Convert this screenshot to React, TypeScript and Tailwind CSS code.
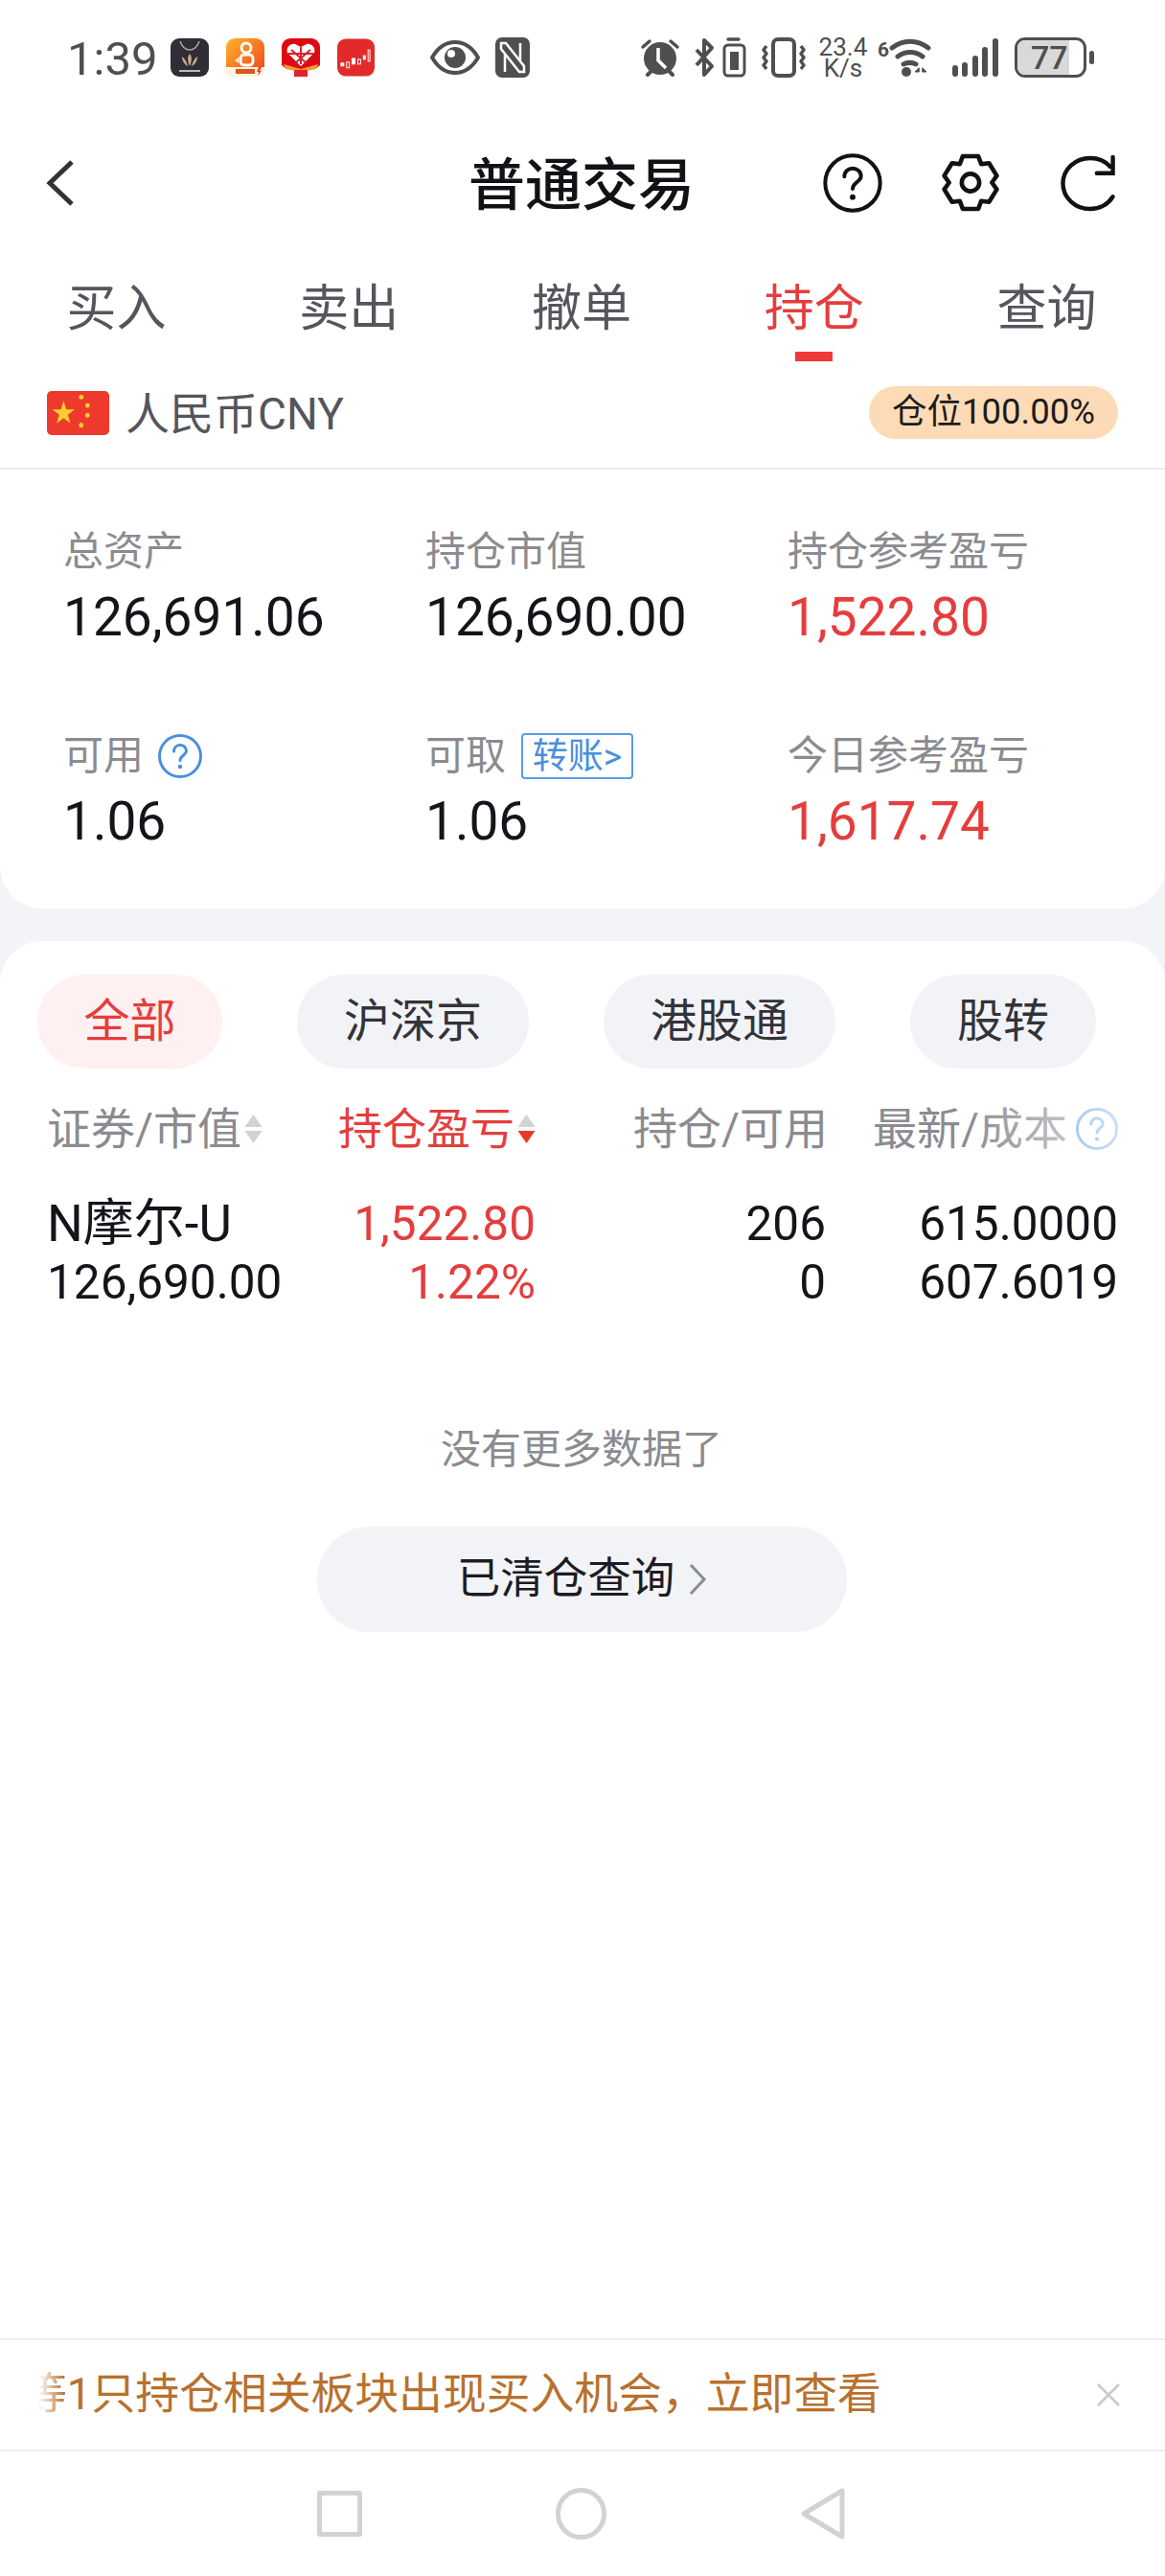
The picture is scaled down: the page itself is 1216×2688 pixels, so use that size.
function HelpIcon({ className, color }: { className: string; color: string }) {
  return (
    <svg viewBox="0 0 48 48" className={className} fill="none" stroke={color} strokeLinecap="round">
      <circle cx="24" cy="24" r="21.5" strokeWidth="3" />
      <path d="M17.5 19c0-4 3-6.500 6.500-6.500s6.500 2.500 6.500 6c0 4.500-6.500 5-6.500 10" strokeWidth="3" />
      <circle cx="24" cy="35" r="1.200" strokeWidth="2" fill={color} />
    </svg>
  );
}

function AppIcons() {
  return (
    <div className="flex ml-[13px] gap-[18px]">
      <svg viewBox="0 0 40 40" className="w-[40px] h-[40px]">
        <rect width="40" height="40" rx="9" fill="#2f2d36" />
        <path d="M10 3c2 6 6 9 10 9s8-3 10-9" stroke="#b8a48c" strokeWidth="1.500" fill="none" />
        <path d="M20 29c-2-5-3-9 0-13c3 4 2 8 0 13zM18 29c-4-2-6-6-6-10c3 2 5 6 6 10zM22 29c4-2 6-6 6-10c-3 2-5 6-6 10z" fill="#c9a98a" />
        <rect x="9" y="33" width="22" height="2" fill="#bbb" />
      </svg>
      <svg viewBox="0 0 40 40" className="w-[40px] h-[40px]">
        <defs>
          <linearGradient id="ks" x1="0" y1="0" x2="1" y2="1">
            <stop offset="0" stopColor="#ffb52a" />
            <stop offset="1" stopColor="#f33c1c" />
          </linearGradient>
        </defs>
        <rect width="40" height="40" rx="9" fill="url(#ks)" />
        <circle cx="21" cy="10" r="5" fill="none" stroke="#fff" strokeWidth="3" />
        <rect x="15" y="17" width="13" height="11" rx="4" fill="none" stroke="#fff" strokeWidth="3" />
        <path d="M13 20l-4 3l4 3z" fill="#fff" />
        <path d="M0 30h40v3a7 7 0 0 1-7 7H7a7 7 0 0 1-7-7z" fill="#fff3df" />
        <rect x="10" y="32" width="20" height="5" fill="#d9541e" />
        <path d="M34 30l3 0-2 4h2l-4 5 1-4h-2z" fill="#f33c1c" />
      </svg>
      <svg viewBox="0 0 40 40" className="w-[40px] h-[40px]">
        <path d="M9 0h22a9 9 0 0 1 9 9v19l-5 4H5l-5-4V9a9 9 0 0 1 9-9z" fill="#dd0a12" />
        <path d="M20 29L6 15c-2-6 4-10 8-9l6 3l6-3c4-1 10 3 8 9z" fill="#fff" />
        <path d="M20 9v18M10 12l16 14M30 12L14 26M7 16h26" stroke="#d5232c" strokeWidth="2" />
        <path d="M2 27l18 5l18-5l-2 5l-16 3l-16-3z" fill="#f39b30" />
        <rect x="13" y="33" width="14" height="7" fill="#e4212a" />
      </svg>
      <svg viewBox="0 0 40 40" className="w-[39px] h-[40px]">
        <rect width="40" height="40" rx="9" fill="#e32a2a" />
        <g fill="#fff" stroke="#fff" strokeWidth="1">
          <rect x="4" y="26" width="3" height="3" />
          <rect x="10" y="25" width="3" height="6" fill="none" />
          <rect x="16" y="21" width="3" height="6" />
          <rect x="22" y="22" width="3" height="5" fill="none" />
          <rect x="28" y="18" width="2" height="4" />
          <rect x="33" y="12" width="2" height="12" fill="none" />
        </g>
      </svg>
    </div>
  );
}

function StatusIconsRight() {
  return (
    <div className="flex items-center ml-auto text-[#4f4f4f]">
      <svg viewBox="0 0 42 40" className="w-[42px] h-[40px]" fill="#4f4f4f">
        <circle cx="21" cy="21" r="17" />
        <path d="M3 9l7-6M39 9l-7-6" stroke="#4f4f4f" strokeWidth="3.500" strokeLinecap="round" />
        <path d="M8 38l4-4M34 38l-4-4" stroke="#4f4f4f" strokeWidth="4" strokeLinecap="round" />
        <path d="M19 10v13l8 8" stroke="#fff" strokeWidth="3.500" fill="none" />
      </svg>
      <svg viewBox="0 0 54 42" className="w-[54px] h-[42px] ml-[15px]" fill="none" stroke="#4f4f4f">
        <path d="M2 13l16 17l-8 9V3l8 8l-16 18" strokeWidth="4" strokeLinejoin="round" />
        <path d="M35 2h11" strokeWidth="3.500" strokeLinecap="round" />
        <rect x="31" y="8" width="21" height="32" rx="4" strokeWidth="3" />
        <rect x="37" y="15" width="9" height="19" fill="#4f4f4f" stroke="none" />
      </svg>
      <svg viewBox="0 0 46 42" className="w-[46px] h-[42px] ml-[16px]" fill="none" stroke="#4f4f4f" strokeWidth="3.500">
        <rect x="12" y="2" width="22" height="38" rx="5" strokeWidth="4" />
        <path d="M5 9l-3 4l3 4l-3 4l3 4l-3 4l3 4M41 9l3 4l-3 4l3 4l-3 4l3 4l-3 4" strokeLinejoin="round" />
      </svg>
      <div className="w-[52px] ml-[13px] flex flex-col items-center text-[#4f4f4f] font-[Roboto,sans-serif]">
        <span className="text-[26px] leading-[22px] h-[22px]">23.4</span>
        <span className="text-[26px] leading-[22px] h-[22px]">K/s</span>
      </div>
      <span className="ml-[10px] mb-[16px] text-[21px] leading-[20px] font-bold font-[Roboto,sans-serif]">6</span>
      <svg viewBox="0 0 44 40" className="w-[44px] h-[40px]" fill="none" stroke="#4f4f4f" strokeWidth="5" strokeLinecap="round">
        <path d="M3 10c12-9 26-9 38 0" />
        <path d="M9 19c8-6 18-6 26 0" />
        <path d="M15 27c4-2 9-2 13 0" />
        <circle cx="18" cy="35" r="5" fill="#4f4f4f" stroke="none" />
        <path d="M31 31l-4 4h4zM35 31l4 4h-4z" fill="#4f4f4f" strokeWidth="1" />
      </svg>
      <svg viewBox="0 0 48 40" className="w-[48px] h-[40px] ml-[22px]" fill="none" stroke="#4f4f4f" strokeWidth="6" strokeLinecap="round">
        <path d="M3 31v6M13 28v9M24 21v16M34 12v25M45 3v34" />
      </svg>
      <div className="relative w-[75px] h-[42px] ml-[17px] rounded-[11px] border-[3px] border-[#4f4f4f] overflow-hidden flex items-center">
        <div className="w-[54px] h-full bg-[#d9d9d9]" />
        <span className="absolute left-[14px] text-[34px] leading-none text-[#4f4f4f] font-[Roboto,sans-serif] font-medium">77</span>
      </div>
      <div className="w-[5px] h-[14px] ml-[3px] rounded-full bg-[#4f4f4f]" />
    </div>
  );
}

function Stat({ label, value, red, extra }: { label: string; value: string; red?: boolean; extra?: React.ReactNode }) {
  return (
    <div className="flex flex-col">
      <div className="flex items-center h-[48px] text-[42px] leading-none text-[#8b8b90]">
        {label}
        {extra}
      </div>
      <div className={`mt-[20px] h-[48px] flex items-center text-[55px] leading-none ${red ? "text-[#e53d3d]" : "text-[#14141a]"}`}>{value}</div>
    </div>
  );
}

function Sort({ active }: { active?: boolean }) {
  return (
    <svg viewBox="0 0 20 34" className="w-[21px] h-[34px] ml-[2px]">
      <path d="M10 2l9 13H1z" fill="#d2d2d2" />
      <path d="M10 32L1 19h18z" fill={active ? "#e8392f" : "#d2d2d2"} />
    </svg>
  );
}

export default function App() {
  const tabs = ["买入", "卖出", "撤单", "持仓", "查询"];
  const pills = [
    { text: "沪深京", w: "w-[242px]" },
    { text: "港股通", w: "w-[242px]" },
    { text: "股转", w: "w-[194px]" },
  ];

  return (
    <div className="w-[1216px] h-[2688px] bg-white flex flex-col overflow-hidden font-[Roboto,'Noto_Sans_CJK_SC',sans-serif]">
      {/* status bar */}
      <div className="h-[120px] flex items-center pl-[70px] pr-[74px] shrink-0">
        <span className="w-[95px] mt-[2px] text-[49px] leading-none text-[#4f4f4f]">1:39</span>
        <AppIcons />
        <svg viewBox="0 0 52 36" className="w-[52px] h-[36px] ml-[58px]">
          <path d="M2 18C9 6 17 2 26 2s17 4 24 16C43 30 35 34 26 34S9 30 2 18z" fill="none" stroke="#4f4f4f" strokeWidth="4" strokeLinejoin="round" />
          <circle cx="26" cy="18" r="11" fill="#4f4f4f" />
          <circle cx="22" cy="14" r="4" fill="#fff" />
        </svg>
        <svg viewBox="0 0 36 42" className="w-[36px] h-[42px] ml-[16px]">
          <rect width="36" height="42" rx="7" fill="#4f4f4f" />
          <path d="M6 6h5l19 24v6h-5L6 12zM10 18v18M26 6v18" fill="none" stroke="#fff" strokeWidth="2.500" />
        </svg>
        <StatusIconsRight />
      </div>

      {/* header */}
      <div className="relative h-[70px] mt-[38px] flex items-center justify-center shrink-0">
        <svg viewBox="0 0 30 48" className="absolute left-[48px] top-[9px] w-[30px] h-[48px]" fill="none" stroke="#333" strokeWidth="5">
          <path d="M27 2L4 24l23 22" />
        </svg>
        <span className="mr-[2px] text-[59px] leading-none text-[#111116] font-medium">普通交易</span>
        <HelpIcon className="absolute left-[858px] top-[1px] w-[64px] h-[64px]" color="#111116" />
        <svg viewBox="0 0 60 64" className="absolute left-[982px] top-0 w-[62px] h-[65px]" fill="none" stroke="#111116" strokeWidth="4.500" strokeLinejoin="round">
          <path d="M22 5h16l3 8 8-1 8 13-5 7 5 7-8 13-8-1-3 8H22l-3-8-8 1-8-13 5-7-5-7 8-13 8 1z" />
          <circle cx="30" cy="32" r="9" />
        </svg>
        <svg viewBox="0 0 60 60" className="absolute left-[1106px] top-[4px] w-[60px] h-[59px]" fill="none" stroke="#111116" strokeWidth="4.500" strokeLinecap="round">
          <path d="M53 12C47 5 39 3 32 3C16 3 3 15 3 30s13 27 29 27c10 0 19-5 24-13" />
          <path d="M56 2v17H39" />
        </svg>
      </div>

      {/* tabs */}
      <div className="mt-[65px] pr-[2px] flex shrink-0">
        {tabs.map((t) => (
          <div key={t} className="flex-1 flex flex-col items-center">
            <span className={`h-[60px] flex items-center text-[52px] leading-none ${t === "持仓" ? "text-[#e53d3d]" : "text-[#55555d]"}`}>{t}</span>
            <div className={`mt-[14px] w-[39px] h-[10px] ${t === "持仓" ? "bg-[#ee3a3a]" : "bg-transparent"}`} />
          </div>
        ))}
      </div>

      {/* currency row */}
      <div className="mt-[26px] h-[55px] flex items-center pl-[49px] pr-[49px] shrink-0">
        <svg viewBox="0 0 30 20" preserveAspectRatio="none" className="w-[65px] h-[46px] rounded-[5px]">
          <rect width="30" height="20" fill="#ee3a2c" />
          <path d="M8 4.500l1.300 3.900 4.100 0-3.300 2.400 1.200 3.900-3.300-2.400-3.300 2.400 1.200-3.900-3.300-2.400 4.100 0z" fill="#ffce2e" />
          <g fill="#ffce2e">
            <circle cx="16.500" cy="2.700" r="1.100" />
            <circle cx="19.500" cy="6.500" r="1.100" />
            <circle cx="19.500" cy="11" r="1.100" />
            <circle cx="16.500" cy="15.500" r="1.100" />
          </g>
        </svg>
        <span className="ml-[17px] mt-[2px] text-[46px] leading-none text-[#55555d]">人民币CNY</span>
        <div className="ml-auto w-[260px] h-[55px] rounded-full bg-[#fddbb6] flex items-center justify-center text-[36.500px] leading-none text-[#1c1c1c]">仓位100.00%</div>
      </div>

      <div className="mt-[30px] h-[2px] bg-[#ededf0] shrink-0" />

      {/* body on grey */}
      <div className="flex-1 bg-[#f3f4f8] flex flex-col min-h-0">
        <div className="bg-white rounded-b-[44px] h-[458px] pt-[62px] pl-[66px] grid grid-cols-[378px_378px_1fr] content-start gap-y-[97px] shrink-0">
          <Stat label="总资产" value="126,691.06" />
          <Stat label="持仓市值" value="126,690.00" />
          <Stat label="持仓参考盈亏" value="1,522.80" red />
          <Stat label="可用" value="1.06" extra={<HelpIcon className="ml-[14px] w-[48px] h-[48px]" color="#4a8fe0" />} />
          <Stat
            label="可取"
            value="1.06"
            extra={
              <span className="ml-[16px] w-[117px] h-[48px] rounded-[4px] border-2 border-[#5b9be6] flex items-center justify-center text-[37px] leading-none text-[#4a8fe0]">转账&gt;</span>
            }
          />
          <Stat label="今日参考盈亏" value="1,617.74" red />
        </div>

        <div className="mt-[34px] flex-1 bg-white rounded-t-[44px] flex flex-col min-h-0">
          {/* filter pills */}
          <div className="mt-[35px] pl-[39px] flex gap-[78px] shrink-0">
            <div className="w-[193px] h-[98px] rounded-full bg-[#fff0f1] text-[#e53d3d] text-[48px] leading-none flex items-center justify-center">全部</div>
            {pills.map((p) => (
              <div key={p.text} className={`${p.w} h-[98px] rounded-full bg-[#f2f3f7] text-[#33333a] text-[48px] leading-none flex items-center justify-center`}>{p.text}</div>
            ))}
          </div>

          {/* table head */}
          <div className="relative mt-[35px] h-[56px] flex items-center pl-[49px] text-[46px] leading-none text-[#8b8b90] shrink-0">
            <div className="flex items-center w-[304px] whitespace-nowrap">证券/市值<Sort /></div>
            <div className="flex items-center w-[308px] whitespace-nowrap text-[#e53d3d]">持仓盈亏<Sort active /></div>
            <div className="w-[200px] whitespace-nowrap">持仓/可用</div>
            <div className="ml-[50px] flex items-center whitespace-nowrap">最新/成本<HelpIcon className="ml-[8px] w-[46px] h-[46px]" color="#4a8fe0" /></div>
            <div className="absolute top-0 right-[30px] w-[180px] h-full bg-gradient-to-r from-white/0 to-white/80" />
          </div>

          {/* holding row */}
          <div className="mt-[51px] pl-[49px] pr-[49px] grid grid-cols-[251px_259px_303px_305px] auto-rows-[41px] gap-y-[20px] text-[49.500px] leading-none text-[#14141a] shrink-0">
            <div className="flex items-center whitespace-nowrap text-[53px]">N摩尔-U</div>
            <div className="flex items-center justify-end text-[#e53d3d]">1,522.80</div>
            <div className="flex items-center justify-end">206</div>
            <div className="flex items-center justify-end">615.0000</div>
            <div className="flex items-center">126,690.00</div>
            <div className="flex items-center justify-end text-[#e53d3d]">1.22%</div>
            <div className="flex items-center justify-end">0</div>
            <div className="flex items-center justify-end">607.6019</div>
          </div>

          <div className="mt-[132px] pr-[2px] h-[44px] text-center text-[42px] leading-[44px] text-[#8b8b90] shrink-0">没有更多数据了</div>

          <div className="mt-[58px] ml-[331px] w-[553px] h-[110px] rounded-full bg-[#f2f3f7] flex items-center justify-center text-[45.500px] leading-none text-[#1c1c22] shrink-0">
            已清仓查询
            <svg viewBox="0 0 20 36" className="ml-[14px] w-[20px] h-[36px]" fill="none" stroke="#8b8b90" strokeWidth="3">
              <path d="M3 3l14 15L3 33" />
            </svg>
          </div>

          <div className="flex-1" />

          {/* banner */}
          <div className="h-[118px] border-y-2 border-[#eeeeee] flex items-center shrink-0">
            <div className="relative ml-[40px] w-[1000px] overflow-hidden">
              <div className="-ml-[16px] whitespace-nowrap text-[45.800px] leading-[60px] text-[#b8712d]">等1只持仓相关板块出现买入机会，立即查看</div>
              <div className="absolute left-0 top-0 h-full w-[28px] bg-gradient-to-r from-white to-white/0" />
            </div>
            <svg viewBox="0 0 26 26" className="ml-auto mr-[46px] w-[26px] h-[26px]" stroke="#c9c9cc" strokeWidth="2.500">
              <path d="M2 2l22 22M24 2L2 24" />
            </svg>
          </div>

          {/* nav */}
          <div className="h-[130px] flex items-start pt-[38px] shrink-0">
            <div className="ml-[331px] w-[47px] h-[48px] mt-[3px] border-[5px] border-[#d2d2d2] rounded-[3px]" />
            <div className="ml-[202px] w-[53px] h-[54px] border-[5px] border-[#d2d2d2] rounded-full" />
            <svg viewBox="0 0 46 54" className="ml-[202px] w-[48px] h-[54px]" fill="none" stroke="#d2d2d2" strokeWidth="5" strokeLinejoin="round">
              <path d="M43 3L3 27l40 24z" />
            </svg>
          </div>
        </div>
      </div>
    </div>
  );
}
